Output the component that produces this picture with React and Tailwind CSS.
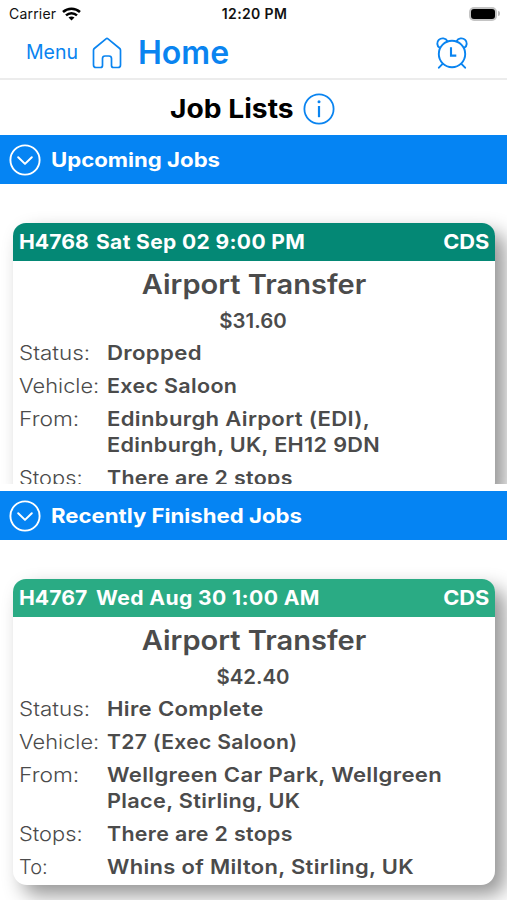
import clsx from "clsx";

const jobs = {
    upcoming: {
        id: "H4768",
        when: "Sat Sep 02 9:00 PM",
        whenStretch: "scale-x-[1.05]",
        headerColor: "bg-[#048875]",
        company: "CDS",
        title: "Airport Transfer",
        price: "$31.60",
        rows: [
            { label: "Status:", stretch: "scale-x-[1.12]", lines: [["Dropped", "scale-x-[1.11]"]] },
            { label: "Vehicle:", stretch: "scale-x-[1.09]", lines: [["Exec Saloon", "scale-x-[1.075]"]] },
            {
                label: "From:",
                stretch: "scale-x-[1.14]",
                lines: [
                    ["Edinburgh Airport (EDI),", "scale-x-[1.105]"],
                    ["Edinburgh, UK, EH12 9DN", "scale-x-[1.083]"],
                ],
            },
            { label: "Stops:", stretch: "scale-x-[1.09]", lines: [["There are 2 stops", "scale-x-[1.07]"]] },
        ],
    },
    finished: {
        id: "H4767",
        when: "Wed Aug 30 1:00 AM",
        whenStretch: "scale-x-[1.057]",
        headerColor: "bg-[#2aab84]",
        company: "CDS",
        title: "Airport Transfer",
        price: "$42.40",
        rows: [
            { label: "Status:", stretch: "scale-x-[1.12]", lines: [["Hire Complete", "scale-x-[1.106]"]] },
            { label: "Vehicle:", stretch: "scale-x-[1.09]", lines: [["T27 (Exec Saloon)", "scale-x-[1.055]"]] },
            {
                label: "From:",
                stretch: "scale-x-[1.14]",
                lines: [
                    ["Wellgreen Car Park, Wellgreen", "scale-x-[1.106]"],
                    ["Place, Stirling, UK", "scale-x-[1.084]"],
                ],
            },
            { label: "Stops:", stretch: "scale-x-[1.09]", lines: [["There are 2 stops", "scale-x-[1.07]"]] },
            { label: "To:", stretch: "", lines: [["Whins of Milton, Stirling, UK", "scale-x-[1.097]"]] },
        ],
    },
};

function HomeIcon() {
    return (
        <svg width="30" height="32" viewBox="0 0 30 32" fill="none" stroke="#0a84f0" strokeWidth="1.7" strokeLinejoin="round">
            <path d="M1.5 13.2Q1.5 12.2 2.3 11.5L14 1.8Q15 1 16 1.8L27.7 11.5Q28.5 12.2 28.5 13.2V28Q28.5 30.5 26 30.5H21.5Q19.5 30.5 19.5 28.5V21.5Q19.5 19 17 19H13Q10.5 19 10.5 21.5V28.5Q10.5 30.5 8.5 30.5H4Q1.5 30.5 1.5 28Z" />
        </svg>
    );
}

function AlarmIcon() {
    return (
        <svg width="32" height="32" viewBox="0 0 32 32" fill="none" stroke="#0a84f0" strokeWidth="1.9" strokeLinecap="round" strokeLinejoin="round">
            <circle cx="16" cy="17" r="13.2" />
            <path d="M3.4 10.6C.8 8.7.6 5 2.8 2.9C5.4.4 9.8 1 11.4 4.2" />
            <path d="M28.6 10.6C31.2 8.7 31.4 5 29.2 2.9C26.6.4 22.2 1 20.6 4.2" />
            <path d="M6.6 26.8L2.9 30.7M25.4 26.8L29.1 30.7" />
            <path d="M15 10.3V18.6H20.3" strokeLinecap="butt" strokeLinejoin="miter" strokeWidth="2.1" />
        </svg>
    );
}

function InfoIcon() {
    return (
        <svg width="32" height="32" viewBox="0 0 32 32" fill="none" stroke="#0a84f0" strokeWidth="1.8">
            <circle cx="16" cy="16" r="14.6" />
            <path d="M16 13V24.2" strokeWidth="2.2" />
            <circle cx="16" cy="8.8" r="1.5" fill="#0a84f0" stroke="none" />
        </svg>
    );
}

function ChevronIcon() {
    return (
        <svg width="32" height="32" viewBox="0 0 32 32" fill="none" stroke="white" strokeWidth="1.9" strokeLinecap="round" strokeLinejoin="round">
            <circle cx="16" cy="16" r="14.6" />
            <path d="M9.2 13.2L16 19.9L22.8 13.2" strokeWidth="2" />
        </svg>
    );
}

function StatusBar() {
    return (
        <div className="grid h-[27px] grid-cols-3 items-center pl-[9px] pr-[7px] text-[14px] text-[#111]">
            <div className="flex items-center gap-[6px]">
                <span className="tracking-[0.2px]">Carrier</span>
                <svg width="19" height="14" viewBox="0 0 19 14" fill="none" stroke="black" strokeWidth="2.5">
                    <path d="M1 5C5.8.5 13.2.5 18 5" />
                    <path d="M4 8.4C7.2 5.4 11.8 5.4 15 8.4" />
                    <path d="M9.5 13.6L6.5 10.6C8.2 9 10.8 9 12.5 10.6Z" fill="black" stroke="none" />
                </svg>
            </div>
            <div className="text-center font-semibold tracking-[0.35px]">12:20 PM</div>
            <div className="flex items-center justify-end gap-[1px]">
                <div className="h-[14px] w-[28px] rounded-[5px] bg-[#c4c4c4] p-[2px]">
                    <div className="h-full rounded-[3px] bg-black" />
                </div>
                <div className="h-[5px] w-[2px] rounded-r bg-[#bbb]" />
            </div>
        </div>
    );
}

function SectionBanner({ title }) {
    return (
        <div className="flex h-[49px] shrink-0 items-center gap-[10px] bg-[#0584f3] pl-[9px] text-white">
            <ChevronIcon />
            <h2 className="origin-left scale-x-[1.108] text-[20px] font-bold">{title}</h2>
        </div>
    );
}

function JobCard({ job }) {
    return (
        <div className="ml-[13px] mr-[12px] mt-[39px] rounded-[14px] bg-white pb-[5px] text-[20px] text-[#4b4b4b] shadow-[10px_10px_20px_rgba(0,0,0,0.42)]">
            <div className={clsx("flex h-[38px] items-center rounded-t-[13px] pl-[6px] pr-[6px] font-bold text-white", job.headerColor)}>
                <span className="w-[77px] origin-left scale-x-[1.06]">{job.id}</span>
                <span className={clsx("flex-1 origin-left tracking-[0.35px]", job.whenStretch)}>{job.when}</span>
                <span className="origin-right scale-x-[1.09]">{job.company}</span>
            </div>
            <h3 className="scale-x-[1.075] pt-[6px] text-center text-[27px] font-semibold leading-[36px]">{job.title}</h3>
            <p className="scale-x-[1.02] pt-[5px] pr-[2px] text-center font-semibold leading-[26px]">{job.price}</p>
            <div className="flex flex-col gap-[8px] pt-[7px] pl-[6px] leading-[25.2px]">
                {job.rows.map((row) => (
                    <div key={row.label} className="flex">
                        <div className={clsx("w-[88px] shrink-0 origin-left font-light", row.stretch)}>{row.label}</div>
                        <div className="font-semibold tracking-[0.3px] whitespace-nowrap">
                            {row.lines.map(([text, stretch]) => (
                                <div key={text} className={clsx("origin-left", stretch)}>
                                    {text}
                                </div>
                            ))}
                        </div>
                    </div>
                ))}
            </div>
        </div>
    );
}

export default function App() {
    return (
        <div className="flex h-[900px] w-[507px] flex-col overflow-hidden bg-white font-['Inter',sans-serif]">
            <StatusBar />
            <nav className="flex h-[53px] shrink-0 items-center border-b-2 border-[#ececec] pl-[26px] pr-[39px] text-[#0a84f0]">
                <span className="w-[66px] text-[19.5px]">Menu</span>
                <HomeIcon />
                <span className="ml-[16px] flex-1 text-[32px] font-semibold">Home</span>
                <AlarmIcon />
            </nav>
            <div className="flex h-[55px] shrink-0 items-center justify-center gap-[10px] pt-[2px] pr-[3px]">
                <h1 className="w-[123px] origin-left scale-x-[1.085] text-[26px] font-bold whitespace-nowrap text-black">Job Lists</h1>
                <InfoIcon />
            </div>

            <SectionBanner title="Upcoming Jobs" />
            <div className="h-[300px] shrink-0 overflow-hidden">
                <JobCard job={jobs.upcoming} />
            </div>

            <div className="h-[7px] shrink-0" />
            <SectionBanner title="Recently Finished Jobs" />
            <div className="min-h-0 flex-1 overflow-hidden">
                <JobCard job={jobs.finished} />
            </div>
        </div>
    );
}
